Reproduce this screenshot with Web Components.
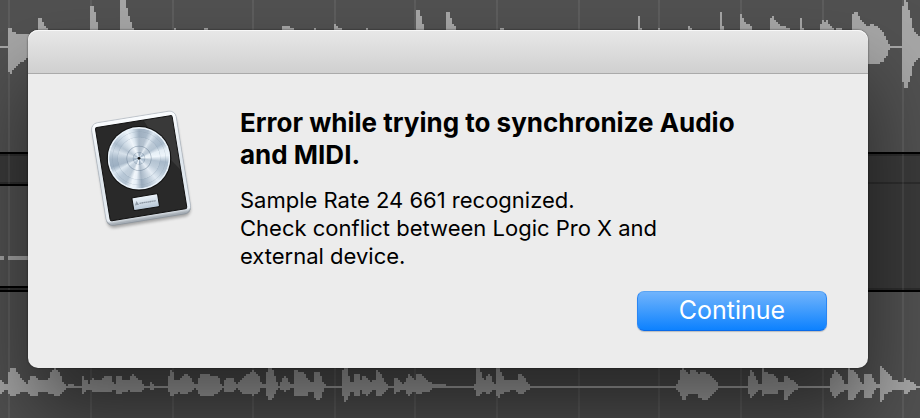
<!DOCTYPE html>
<html lang="en">
<head>
<meta charset="utf-8">
<title>Audio and MIDI synchronization</title>
<style>
html, body { margin: 0; min-height: 100vh; background: #515151; }
body { font-family: Inter, "Liberation Sans", sans-serif; color: #000; }
</style>
</head>
<body>
<sync-screen></sync-screen>

<script>
const TOP = [0,138,144, 23,138,144, 24,90,210, 30,78,222, 36,90,216, 44,98,205, 50,102,198, 84,102,174, 113,102,174, 114,60,170, 120,48,170, 126,60,170, 136,78,170, 144,88,170, 148,96,170, 269,96,170, 270,18,170, 280,18,170, 286,42,170, 292,72,170, 294,96,170, 359,96,170, 360,0,170, 376,0,170, 384,36,170, 394,66,170, 402,90,170, 521,96,170, 522,84,170, 527,84,170, 528,96,170, 611,96,170, 612,84,170, 623,84,170, 624,96,170, 845,96,170, 846,78,170, 868,78,170, 872,84,170, 882,84,170, 883,96,170, 941,96,170, 942,84,170, 947,84,170, 948,96,170, 1001,96,170, 1002,66,170, 1008,78,170, 1025,84,170, 1026,96,170, 1097,96,170, 1098,84,170, 1103,84,170, 1104,96,170, 1247,96,170, 1248,30,170, 1259,30,170, 1265,54,170, 1271,78,170, 1272,96,170, 1337,96,170, 1338,36,170, 1349,36,170, 1356,66,170, 1368,84,170, 1380,96,170,
1499,96,170, 1500,84,170, 1511,84,170, 1512,96,170, 1913,96,170, 1914,48,170, 1919,48,170, 1920,84,170, 1925,84,170, 1926,96,170, 1973,96,170, 1974,84,170, 1979,84,170, 1980,96,170, 2063,96,170, 2064,78,170, 2069,78,170, 2074,84,170, 2076,96,170, 2159,96,170, 2160,36,170, 2165,36,170, 2166,78,170, 2171,78,170, 2172,96,170, 2219,96,170, 2220,36,170, 2226,48,170, 2236,66,170, 2255,80,170, 2256,96,170, 2309,96,170, 2310,60,170, 2318,48,170, 2330,66,170, 2344,76,170, 2369,84,170, 2370,96,170, 2399,96,170, 2400,54,170, 2405,54,170, 2406,84,170, 2411,84,170, 2412,96,170, 2459,96,170, 2460,84,170, 2466,60,170, 2474,66,170, 2478,60,170, 2483,60,170, 2490,78,170, 2501,84,170, 2502,96,170, 2508,84,170, 2525,84,170, 2526,96,170, 2555,96,170, 2556,42,170, 2564,36,170, 2574,40,170, 2586,66,180, 2600,78,190, 2618,72,192, 2634,80,192, 2648,96,186, 2660,118,168, 2671,138,144, 2705,138,144, 2706,30,222, 2712,0,264, 2720,0,264, 2730,40,240, 2736,72,210, 2742,90,186, 2760,108,174];

const BOTTOM = [0,117,159, 6,117,159, 12,132,147, 23,132,147, 24,108,162, 30,84,165, 45,84,165, 50,96,165, 60,108,160, 70,124,153, 82,132,153, 90,108,165, 112,112,165, 118,122,152, 145,122,159, 150,96,159, 156,96,162, 163,84,165, 180,100,165, 192,132,150, 200,138,144, 210,132,144, 222,132,144, 224,138,144, 245,138,144, 246,108,159, 250,108,159, 256,120,152, 262,120,152, 268,132,147, 275,114,153, 292,122,159, 300,122,153, 312,108,153, 332,108,159, 342,132,150, 347,132,150, 348,108,162, 366,108,162, 370,120,150, 380,120,159, 385,120,150, 398,102,159, 412,114,155, 425,124,155, 432,138,144, 449,138,144, 453,126,150, 460,132,147, 464,138,144, 504,138,144, 507,108,156, 510,90,167, 520,96,165, 524,120,160, 540,120,158, 552,102,162, 568,106,158, 580,126,147, 588,138,144, 594,120,156, 602,102,165, 625,102,167, 640,108,165, 655,108,160, 660,126,152, 668,138,144, 674,120,156, 680,114,153, 700,114,153, 706,126,148, 714,132,144, 720,120,156, 738,102,165, 750,104,158, 756,90,165, 764,92,165, 778,110,156, 784,132,144, 797,132,144, 800,96,165, 806,84,180, 820,88,174, 828,120,152, 838,138,144, 846,120,150, 856,108,156, 864,120,150, 875,132,144, 881,132,147, 882,90,165, 912,96,165,
921,114,165, 931,124,153, 941,124,153, 943,96,174, 949,96,180, 959,96,180, 967,120,162, 973,132,147, 979,138,144, 1025,138,144, 1027,96,162, 1033,84,186, 1043,84,180, 1051,126,156, 1059,126,156, 1063,102,168, 1079,102,168, 1083,120,150, 1087,108,162, 1101,112,167, 1111,126,156, 1125,120,150, 1129,90,165, 1141,96,168, 1153,120,156, 1161,132,147, 1171,138,144, 1180,138,144, 1181,114,162, 1196,118,156, 1211,132,147, 1218,120,150, 1224,102,168, 1235,108,160, 1247,120,156, 1251,102,162, 1265,102,160, 1279,120,156, 1295,130,150, 1299,132,144, 1337,132,144, 1339,138,144, 1421,138,144, 1425,132,150, 1429,84,168, 1439,86,168, 1451,120,150, 1457,120,160, 1463,102,162, 1473,108,156, 1481,132,147, 1487,132,147, 1489,84,168, 1495,84,174, 1505,96,162, 1513,120,156, 1541,120,150, 1553,120,158, 1556,102,162, 1566,102,162, 1579,122,152, 1587,132,147, 1596,138,144,
2027,138,144, 2029,132,148, 2039,120,156, 2041,96,160, 2045,84,180, 2057,90,178, 2065,102,162, 2073,90,160, 2089,90,162, 2095,104,170, 2101,96,174, 2107,96,180, 2123,100,180, 2131,108,168, 2145,122,156, 2159,138,144, 2241,138,144, 2245,120,150, 2250,90,174, 2259,96,168, 2271,120,156, 2277,132,147, 2284,132,147, 2285,90,174, 2289,84,170, 2295,96,162, 2314,102,160, 2327,108,165, 2337,126,150, 2349,126,150, 2353,108,180, 2363,108,178, 2369,116,162, 2384,126,153, 2399,138,144, 2488,138,144, 2491,120,150, 2503,90,174, 2514,100,168, 2525,110,156, 2537,136,147, 2543,132,150, 2544,84,180, 2559,90,180, 2573,106,160, 2587,132,147, 2591,132,147, 2592,102,174, 2615,104,172, 2627,132,147, 2639,132,144, 2640,78,186, 2647,84,186, 2651,84,168, 2664,98,158, 2679,118,150, 2694,124,150, 2711,124,150, 2715,114,160, 2723,120,160, 2729,120,153, 2747,136,147, 2760,138,144];

/* Envelopes are triples (x, top, bottom) on a grid three times finer than the
   drawing; the wave is drawn as columns two units wide. */
function wave(points, y0) {
  let d = "", i = 0;
  for (let x = 0; x < 920; x += 2) {
    const fx = x * 3 + 3;
    while (i + 5 < points.length && points[i + 3] <= fx) i += 3;
    const last = i + 3 >= points.length;
    const t = last ? 0 : (fx - points[i]) / (points[i + 3] - points[i]);
    const at = k => points[i + k] + (last ? 0 : t * (points[i + 3 + k] - points[i + k]));
    const top = y0 + 2 * Math.round(at(1) / 6);
    const bottom = y0 + Math.max(48, 2 * Math.round(at(2) / 6));
    d += `M${x} ${top}h2V${bottom}h-2z`;
  }
  return d;
}

class TrackBackdrop extends HTMLElement {
  connectedCallback() {
    const grid = [8,90,172,252,334,414,496,578,658,740,822,902].map(x => `M${x} 0h2V418h-2z`).join("");
    this.attachShadow({ mode: "open" }).innerHTML = `
<style>
:host { display: block; overflow: hidden; background: #515151; }
svg { display: block; width: 100%; height: 100%; }
</style>
<svg viewBox="0 0 920 418" preserveAspectRatio="xMidYMid slice" shape-rendering="crispEdges" aria-hidden="true">
  <rect width="920" height="418" fill="#515151"/>
  <path fill="#3a3a3a" d="M0 154h920v30H0zM460 154h460v136H460z"/>
  <path fill="#2d2d2d" d="M0 154h920v2H0zM0 182h920v2H0zM460 288h460v2H460zM0 288h460v2H0z"/>
  <path fill="#fff" opacity=".07" d="${grid}"/>
  <path fill="#000" d="M0 152h920v2H0zM0 184h460v2H0zM0 286h460v2H0zM0 290h920v2H0z"/>
  <path fill="#a2a2a2" d="M0 256h4v4H0zM8 256h40v4H8z"/>
  <path fill="#a6a6a6" d="${wave(TOP, 0)}${wave(BOTTOM, 340)}"/>
</svg>`;
  }
}
customElements.define("track-backdrop", TrackBackdrop);

class PlatinumIcon extends HTMLElement {
  connectedCallback() {
    this.attachShadow({ mode: "open" }).innerHTML = `
<style>
:host { display: block; }
svg { display: block; width: 100%; }
.disc { width: 188px; height: 188px; border-radius: 50%;
  background:
    radial-gradient(circle, #0000 0 16px, #75869855 17px 18px, #fff3 20px 34px, #75869866 36px 37px, #fff2 39px 62px, #8799aa33 63px 64px, #0000 66px 78px, #8799aa33 79px 80px, #0000 82px 88px, #e9f2fa 90px 94px),
    conic-gradient(from 0deg, #9eafc0, #a9b9c9 18deg, #dae5ef 30deg, #b3c3d2 42deg, #a8bacb 58deg, #e3edf5 70deg, #edf5fb 84deg, #a7b9ca 98deg, #b7c7d6 120deg, #e1eaf3 140deg, #b8c7d5 158deg, #98aabc 174deg, #e7eff7 187deg, #f0f6fb 196deg, #b2c2d1 208deg, #b8c8d7 225deg, #d9e5ef 240deg, #9cafc2 252deg, #a5b7c8 268deg, #d0dce7 286deg, #abbccc 302deg, #ccd9e5 318deg, #edf4fa 336deg, #d7e3ed 346deg, #9eafc0);
}
</style>
<svg viewBox="0 0 375 420" role="img" aria-label="Logic Pro X">
  <defs>
    <linearGradient id="frame" x1="0" y1="0" x2="0" y2="1">
      <stop offset="0" stop-color="#fafcfe"/><stop offset=".5" stop-color="#dde5ec"/>
      <stop offset=".96" stop-color="#e8eef4"/><stop offset="1" stop-color="#9ba3aa"/>
    </linearGradient>
    <linearGradient id="plate" x1="0" y1="0" x2="0" y2="1">
      <stop offset="0" stop-color="#eef5fb"/><stop offset="1" stop-color="#b5c5d5"/>
    </linearGradient>
    <filter id="soft" x="-20%" y="-20%" width="140%" height="140%"><feGaussianBlur stdDeviation="4"/></filter>
  </defs>
  <g transform="rotate(-9.2 183 205)">
    <rect x="57" y="60" width="253" height="309" rx="20" fill="#000" opacity=".3" filter="url(#soft)"/>
    <rect x="55" y="50" width="257" height="312" rx="20" fill="#8e969e"/>
    <rect x="55" y="49" width="257" height="309" rx="20" fill="url(#frame)" stroke="#aeb6be" stroke-width="2"/>
    <rect x="67" y="63" width="233" height="283" rx="5" fill="#292929" stroke="#111" stroke-width="3"/>
    <path d="M214 65h85v162l-42-60z" fill="#fff" opacity=".08"/>
  </g>
  <circle cx="177" cy="175" r="97" fill="#111"/>
  <foreignObject x="83" y="81" width="188" height="188"><div class="disc"></div></foreignObject>
  <circle cx="177" cy="175" r="4" fill="#111"/>
  <g transform="rotate(-9.2 197 306)">
    <rect x="158" y="287" width="78" height="39" rx="3" fill="url(#plate)" stroke="#111" stroke-width="3"/>
    <path d="M167 309l3-6 3 6zM178 307h50" fill="none" stroke="#8d98a4" stroke-width="4" stroke-dasharray="5 1"/>
  </g>
</svg>`;
  }
}
customElements.define("platinum-icon", PlatinumIcon);

class PushButton extends HTMLElement {
  connectedCallback() {
    this.attachShadow({ mode: "open" }).innerHTML = `
<style>
:host { display: block; }
button { display: block; width: 190px; height: 40px; padding: 0 0 2px; border: 1px solid; border-color: #5aa4f3 #2a86f4 #0a6ae8;
  border-radius: 7px; background: linear-gradient(#73b5fc, #3f9bfd 50%, #0a80ff); background-origin: border-box; color: #fff;
  font: 400 25px/36px Inter, "Liberation Sans", sans-serif; box-shadow: 0 1px 1px #0003; }
</style>
<button type="button"><slot></slot></button>`;
  }
}
customElements.define("push-button", PushButton);

class AlertDialog extends HTMLElement {
  connectedCallback() {
    this.attachShadow({ mode: "open" }).innerHTML = `
<style>
:host { display: block; border-radius: 10px; background: #ececec;
  box-shadow: 0 0 2px #000a, 0 50px 80px #00000080; }
header { height: 43px; box-sizing: content-box; border-bottom: 1px solid #aaa; border-radius: 10px 10px 0 0;
  background: linear-gradient(#e8e8e8, #d0d0d0); box-shadow: inset 0 1px #f8f8f8; }
.content { display: grid; grid-template-columns: 125px 1fr; column-gap: 35px; padding: 26px 41px 37px 52px; }
.message { padding-top: 7px; max-width: 540px; }
.action { grid-column: 1 / -1; display: flex; justify-content: flex-end; margin-top: 21px; }
::slotted(h1) { margin: 0 0 15px; font-size: 26px; line-height: 32px; font-weight: 700; }
::slotted(p) { margin: 0; font-size: 22px; line-height: 28px; }
</style>
<header></header>
<div class="content">
  <slot name="icon"></slot>
  <div class="message"><slot></slot></div>
  <div class="action"><slot name="action"></slot></div>
</div>`;
  }
}
customElements.define("alert-dialog", AlertDialog);

class SyncScreen extends HTMLElement {
  connectedCallback() {
    this.attachShadow({ mode: "open" }).innerHTML = `
<style>
:host { display: grid; min-height: 100vh; overflow: hidden; }
track-backdrop, main { grid-area: 1 / 1; min-width: 0; }
track-backdrop { height: 100%; min-height: 0; contain: size; }
main { z-index: 1; padding: 30px 52px 50px 28px; }
</style>
<track-backdrop></track-backdrop>
<main>
  <alert-dialog role="alertdialog" aria-labelledby="title" aria-describedby="detail">
    <platinum-icon slot="icon"></platinum-icon>
    <h1 id="title">Error while trying to synchronize Audio<br>and MIDI.</h1>
    <p id="detail">Sample Rate 24 661 recognized.<br>Check conflict between Logic Pro X and<br>external device.</p>
    <push-button slot="action">Continue</push-button>
  </alert-dialog>
</main>`;
  }
}
customElements.define("sync-screen", SyncScreen);
</script>
</body>
</html>
